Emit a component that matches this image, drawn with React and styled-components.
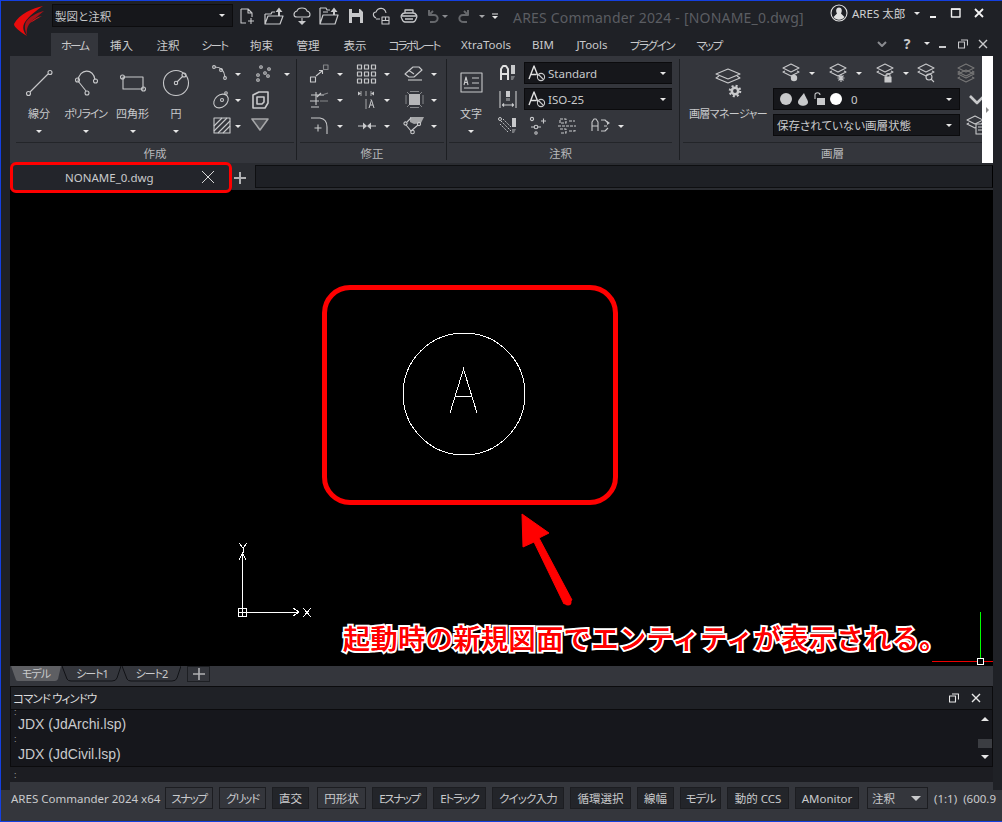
import React from "react";
import styled, { createGlobalStyle } from "styled-components";

const FONT = `"Noto Sans", "Noto Sans CJK JP", sans-serif`;

const Global = createGlobalStyle`
  html, body { margin: 0; padding: 0; background: #212329; }
  * { box-sizing: border-box; }
  body { font-family: ${FONT}; font-feature-settings: "palt"; }
`;

const Root = styled.div`
  width: 1002px; height: 822px; display: flex; flex-direction: column; overflow: hidden;
  background: #1f2126; color: #c9cacc; position: relative;
  border-top: 1px solid #1440e0; border-left: 1px solid #1440e0; border-bottom: 1px solid #1440e0;
`;

/* ---------- icons ---------- */
const Glyph = styled.svg`
  display: block; flex-shrink: 0; fill: none; stroke: ${p => p.$c || "#c8c9cb"};
  stroke-width: ${p => p.$sw || 1.1}; stroke-linejoin: round;
`;
const G = ({ w = 24, h = 20, c, sw, children }) => (
  <Glyph width={w} height={h} viewBox={`0 0 ${w} ${h}`} $c={c} $sw={sw}>{children}</Glyph>
);
const Dot = ({ x, y, r = 1.7 }) => <circle cx={x} cy={y} r={r} />;
const Solid = ({ d, c = "#c8c9cb" }) => <path d={d} fill={c} stroke="none" />;

const Caret = styled.span`
  display: block; flex-shrink: 0; width: 0; height: 0; margin-left: ${p => p.$ml || 0}px;
  border-left: 3px solid transparent; border-right: 3px solid transparent;
  border-top: 3px solid ${p => p.$c || "#e6e6e6"};
`;

/* ---------- title bar ---------- */
const TitleBar = styled.header`
  height: 32px; display: flex; align-items: flex-start; flex-shrink: 0; padding-top: 3px;
`;
const Logo = styled.div`width: 51px; height: 32px; padding-left: 12px; margin-top: 1px;`;
const Workspace = styled.div`
  width: 181px; height: 23px; display: flex; align-items: center; justify-content: space-between;
  background: #16171b; border: 1px solid #0c0c0e; padding: 0 7px 0 2px; font-size: 11.5px; color: #c6c7c9;
`;
const QuickBar = styled.div`display: flex; align-items: center; height: 24px;`;
const QuickBtn = styled.span`
  width: ${p => p.$w || 27}px; display: flex; justify-content: center; align-items: center;
`;
const WindowTitle = styled.div`
  font-size: 14px; letter-spacing: 0.2px; color: #5b5d62; margin-left: 8px; white-space: nowrap; width: 317px; line-height: 26px; padding-top: 1px;
`;
const UserBox = styled.div`
  display: flex; align-items: center; height: 20px; font-size: 11.5px; color: #d0d1d3; margin-top: -1px;
`;
const UserName = styled.span`margin: 0 9px 0 4px; white-space: nowrap;`;
const WinBtn = styled.span`
  display: flex; width: ${p => p.$w || 22}px; justify-content: center; align-items: center;
`;
const HelpMark = styled.span`font-weight: 700; font-size: 14px; color: #c9cacc;`;

/* ---------- ribbon tabs ---------- */
const TabsRow = styled.nav`height: 23px; display: flex; align-items: stretch; padding-left: 50px; flex-shrink: 0;`;
const RibbonTab = styled.div`
  width: ${p => p.$w}px; display: flex; align-items: center; justify-content: center;
  font-size: 11.5px; color: #c9cacc; white-space: nowrap; letter-spacing: ${p => p.$ls || 0}px;
  background: ${p => (p.$on ? "#34363c" : "transparent")};
`;
const TabTools = styled.div`display: flex; align-items: center; margin-left: 139px; margin-top: -2px;`;

/* ---------- ribbon ---------- */
const Ribbon = styled.section`
  height: 107px; display: flex; flex-shrink: 0; margin-left: 9px; margin-right: 9px; background: #34363c; overflow: hidden;
`;
const Panel = styled.div`
  width: ${p => p.$w}px; flex-shrink: 0; display: flex; flex-direction: column; position: relative;
  padding: 0 ${p => p.$pr ?? 3}px 0 ${p => p.$pl ?? 3}px;
  &::after { content: ""; position: absolute; right: 0; top: 3px; bottom: 3px; width: 1px; background: ${p => (p.$nosep ? "transparent" : "#1d1f23")}; }
`;
const PanelBody = styled.div`
  height: 87px; flex-shrink: 0; display: flex; overflow: hidden; padding-left: ${p => p.$pl || 0}px; border-bottom: 1px solid #232529;
`;
const PanelLabel = styled.div`
  font-size: 11.5px; color: #b8b9bb; text-align: center; line-height: 19px; padding-top: 1px;
`;
const BigBtn = styled.div`
  width: ${p => p.$w}px; flex-shrink: 0; display: flex; flex-direction: column; align-items: center; padding-top: 4px;
  margin-right: ${p => p.$mr || 0}px;
`;
const BigIcon = styled.div`height: 40px; width: 100%; display: flex; justify-content: center;`;
const BigLabel = styled.div`
  font-size: 11px; line-height: 16px; margin-top: 6px; color: #c9cacc; white-space: nowrap; height: 16px; letter-spacing: ${p => p.$ls || 0}px;
`;
const BigCaret = styled.div`margin-top: 8px;`;
const SmallGrid = styled.div`
  display: grid; grid-template-columns: ${p => p.$widths}; grid-auto-rows: 26px; padding-top: 5px; align-content: start;
`;
const Tool = styled.div`
  display: flex; align-items: center; gap: ${p => p.$gap ?? 5}px;
  ${p => (p.$w ? `width: ${p.$w}px; flex-shrink: 0;` : "")}
  padding-left: ${p => p.$pl || 0}px;
`;
const Stack = styled.div`display: flex; flex-direction: column; padding-top: 6px;`;
const StackRow = styled.div`
  display: flex; align-items: center; height: ${p => p.$h || 22}px; margin-bottom: ${p => p.$mb ?? 4}px;
`;
const Select = styled.div`
  width: ${p => p.$w}px; height: 22px; flex-shrink: 0; display: flex; align-items: center; gap: 2px;
  margin-left: ${p => p.$ml || 0}px;
  background: #16171b; border: 1px solid #0b0b0d; padding: 0 7px 0 3px;
  font-size: 11.5px; color: #c9cacc; white-space: nowrap;
`;
const Grow = styled.span`flex: 1;`;
const Cell = styled.div`
  width: ${p => p.$w}px; flex-shrink: 0; display: flex; justify-content: center; align-items: center; margin-left: ${p => p.$ml || 0}px;
`;
const LayerZero = styled.span`margin-left: 2px;`;

const WhiteStrip = styled.div`
  width: 11px; flex-shrink: 0; background: #fff; display: flex; align-items: center; justify-content: center; margin-left: auto;
`;
const StripArrow = styled.span`
  width: 0; height: 0; border-top: 3px solid transparent; border-bottom: 3px solid transparent; border-left: 3px solid #8a8a8a;
`;

/* ---------- document tabs ---------- */
const DocBar = styled.div`
  height: 27px; flex-shrink: 0; margin: 0 9px; display: flex; align-items: stretch; background: #2a2c31; padding-top: 2px;
  position: relative; z-index: 2;
`;
const DocTab = styled.div`
  width: 222px; display: flex; align-items: center; background: #23252b; font-size: 11.5px; color: #c9cacc; padding-left: 55px; position: relative;
`;
const DocClose = styled.span`position: absolute; left: 191px; top: 5px;`;
const DocAdd = styled.div`width: 23px; display: flex; align-items: center; justify-content: center; padding-right: 7px;`;
const DocRest = styled.div`flex: 1; background: #1e2025; border: 1px solid #0e0f11; border-right-color: #000; height: 23px;`;
const TabHighlight = styled.div`
  position: absolute; left: 0; top: -1px; width: 222px; height: 31px; border: 3px solid #f00; border-radius: 6px; pointer-events: none;
`;

/* ---------- canvas ---------- */
const Canvas = styled.main`
  height: 476px; flex-shrink: 0; margin: 0 9px; background: #000; position: relative; overflow: hidden;
`;
const Drawing = styled.svg`position: absolute; left: 0; top: 0; width: 983px; height: 476px; fill: none; stroke: #fff;`;
const Callout = styled.div`
  position: absolute; left: 312px; top: 95px; width: 296px; height: 220px; border: 5px solid #f00; border-radius: 28px;
`;
const Note = styled.div`
  position: absolute; left: 333px; top: 429px; white-space: nowrap; font-size: 27px; line-height: 40px; font-weight: 500; color: #f00;
  font-feature-settings: normal; letter-spacing: 0.6px; -webkit-text-stroke: 4px #fff; paint-order: stroke fill;
  text-shadow: 0 0 .6px #f00;
`;

/* ---------- sheet tabs ---------- */
const SheetBar = styled.div`
  height: 16px; flex-shrink: 0; margin: 0 9px; display: flex; background: #34363c;
`;
const Sheet = styled.div`
  width: ${p => p.$w}px; height: 16px; position: relative; font-size: 11px; line-height: 16px; text-align: center; color: #c9cacc; letter-spacing: -1px;
`;
const SheetShape = styled.svg`position: absolute; left: 0; top: 0; z-index: 0;`;
const SheetText = styled.span`position: relative; z-index: 1;`;
const SheetAdd = styled.div`
  width: 23px; height: 16px; margin-left: 6px; border: 1px solid #1d1f23; display: flex; align-items: center; justify-content: center;
`;

/* ---------- command window ---------- */
const Gap = styled.div`height: 4px; flex-shrink: 0; margin: 0 9px; background: #34363c;`;
const Command = styled.section`
  height: 81px; flex-shrink: 0; margin: 0 9px; background: #16171c; border: 1px solid #0b0b0d; display: flex; flex-direction: column;
`;
const CommandHead = styled.div`
  height: 23px; flex-shrink: 0; background: #1f2126; border-bottom: 1px solid #0b0b0d; display: flex; align-items: center;
  padding: 0 5px 0 2px; font-size: 11.5px; color: #dcdcdd;
`;
const CommandName = styled.span`letter-spacing: -0.9px;`;
const HeadBtn = styled.span`width: 22px; display: flex; justify-content: center;`;
const CommandBody = styled.div`flex: 1; display: flex; position: relative;`;
const Lines = styled.div`flex: 1; padding-left: 7px; font: 14px/20px "Liberation Sans", sans-serif; color: #c9cacc;`;
const Colon = styled.div`height: ${p => p.$h}px; line-height: ${p => p.$h}px; font-size: 9px; margin-left: -4px; color: #9a9b9d;`;
const Line = styled.div`height: 20px; line-height: 20px;`;
const ScrollBar = styled.div`width: 15px; display: flex; flex-direction: column; align-items: center; padding-top: 7px;`;
const ArrowUp = styled.span`width: 0; height: 0; border-left: 4px solid transparent; border-right: 4px solid transparent; border-bottom: 4px solid #e6e6e6;`;
const ArrowDown = styled(ArrowUp)`border-bottom: 0; border-top: 4px solid #e6e6e6; margin-top: 7px;`;
const Thumb = styled.span`width: 14px; height: 9px; background: #3b3d42; margin-top: 18px;`;
const CommandInput = styled.div`
  height: 15px; flex-shrink: 0; margin: 0 9px; background: #1c1d22; padding-left: 4px; color: #9a9b9d; font-size: 9px; line-height: 15px;
`;

/* ---------- status bar ---------- */
const StatusBar = styled.footer`
  flex: 1; display: flex; align-items: flex-start; padding-top: 5px; padding-left: 10px; font-size: 11.5px; color: #c9cacc; white-space: nowrap; overflow: hidden;
  background:
    linear-gradient(#34363c, #34363c) 9px 0 / calc(100% - 18px) 100% no-repeat,
    linear-gradient(#34363c, #34363c) 0 8px / 100% 100% no-repeat,
    #1f2126;
`;
const StatusTitle = styled.span`width: 154px; line-height: 23px; flex-shrink: 0;`;
const StatusBtn = styled.div`
  width: ${p => p.$w}px; height: 22px; margin-right: ${p => p.$mr ?? 6}px; flex-shrink: 0; background: ${p => (p.$on ? "#23252a" : "#34363c")};
  border: 1px solid #1c1d21; display: flex; align-items: center; justify-content: center; color: #c9cacc; letter-spacing: ${p => p.$ls || 0}px;
`;
const StatusSelect = styled(StatusBtn)`justify-content: space-between; padding: 0 6px 0 4px; margin-left: 2px;`;
const BigDown = styled.span`width: 0; height: 0; border-left: 5px solid transparent; border-right: 5px solid transparent; border-top: 5px solid #c9cacc;`;
const StatusInfo = styled.span`line-height: 23px; word-spacing: 3px;`;

/* ---------- data ---------- */
const ribbonTabs = [
  ["ホーム", 47, true, -2], ["挿入", 47], ["注釈", 46], ["シート", 47, false, -1.5], ["拘束", 47], ["管理", 46], ["表示", 48],
  ["コラボレート", 70, false, -1.9], ["XtraTools", 74], ["BIM", 40], ["JTools", 58], ["プラグイン", 62, false, -1.4], ["マップ", 52, false, -1.5],
];
const statusBtns = [
  ["スナップ", 48, false, 6, -1.4], ["グリッド", 47, false, 6, -1.4], ["直交", 37, true, 8, 0], ["円形状", 49, false, 6, 0], ["Eスナップ", 55, true, 6, -1.4], ["Eトラック", 53, true, 6, -1.2],
  ["クイック入力", 72, true, 6, -0.8], ["循環選択", 61, true, 6, 0], ["線幅", 37, true, 6, 0], ["モデル", 41, true, 6, -1], ["動的 CCS", 62, true, 6, 0], ["AMonitor", 64, true, 6, 0],
];

const LayerGlyph = ({ y = 0, c }) => (
  <g stroke={c}>
    <path d={`M4 ${y + 5} L12 ${y + 1} L20 ${y + 5} L12 ${y + 9} Z`} />
    <path d={`M6 ${y + 8} L4 ${y + 9} L12 ${y + 13} L20 ${y + 9} L18 ${y + 8}`} />
  </g>
);
const TextStyleIcon = () => (
  <G w={18} h={18}>
    <path d="M1 15 L6 2 L10 12 M2.8 10.5 H8.5" sw={1.4} strokeWidth={1.4} stroke="#e0e0e0" />
    <circle cx="13" cy="13" r="3.6" />
    <path d="M10.5 10.5 L15.5 15.5" />
  </G>
);

export default function App() {
  return (
    <Root>
      <Global />
      <TitleBar>
        <Logo>
          <svg width="32" height="32" viewBox="0 0 32 32">
            <path d="M30 1 C20 3 6 9 1 19 C1 22 6 26 14 31 C10 26 9 22 12 17 C16 11 24 5 30 1Z" fill="#e80c0c" />
            <path d="M31 6 C23 8 16 12 13 17 C11 21 12 26 14 30 C13 24 15 19 20 15 C24 12 27 9 31 6Z" fill="#a81218" />
            <path d="M29 11 C24 12 19 15 16 19 C18 17 24 14 29 11Z" fill="#d81616" />
          </svg>
        </Logo>
        <Workspace>製図と注釈<Caret /></Workspace>
        <QuickBar>
          <QuickBtn $w={27}><G w={18} h={18}><path d="M3 2 H10 L14 6 V10 M3 2 V16 H8 M10 2 V6 H14" /><path d="M13 11 V17 M10 14 H16" /></G></QuickBtn>
          <QuickBtn $w={28}><G w={22} h={20} sw={1.2}><path d="M2 8 H8 L9 6 H12 M2 8 V18 H17 L20 10 H5 L2 18" /><Solid d="M15 10 V6 H12.5 L16 1.5 L19.5 6 H17 V10Z" /></G></QuickBtn>
          <QuickBtn $w={27}><G w={20} h={20}><path d="M5 11 C1 11 1 6 5 5 C6 1 14 1 15 5 C19 6 19 11 15 11 Z" /><path d="M10 12 V15" /><Solid d="M6 15 H14 L10 19Z" /></G></QuickBtn>
          <QuickBtn $w={27}><G w={22} h={20} sw={1.2}><path d="M2 2 H8 L9 4 H12 M2 2 V18 H17 L20 9 H5 L2 18 M5 6 H10" /><Solid d="M15 9 V6 H12.5 L16 1.5 L19.5 6 H17 V9Z" /></G></QuickBtn>
          <QuickBtn $w={27}><G w={16} h={16} sw={0}><Solid d="M1 1 H12 L15 4 V15 H1Z" /><Solid d="M4 1 H11 V5 H4Z M4 9 H12 V15 H4Z" c="#1f2126" /></G></QuickBtn>
          <QuickBtn $w={26}><G w={20} h={20}><path d="M4 12 C0 10 1 6 4 6 C6 1 13 1 14 7 M8 13 H4" /><rect x="10" y="11" width="7" height="7" /><path d="M10 14.5 H17 M13.5 11 V14.5" /></G></QuickBtn>
          <QuickBtn $w={28}><G w={18} h={16} sw={1.3}><path d="M5 5 V2 H13 V5 M2 11 C0 8 2 5 5 5 H13 C16 5 18 8 16 11 C15 14 13 14 13 14 H5 C5 14 3 14 2 11Z M2 8 H16 M5 11 H13" /></G></QuickBtn>
          <QuickBtn $w={19}><G w={16} h={16} c="#66686c" sw={2}><path d="M4 2 V7 H9 C14 7 14 14 8 14 H5 M4 7 L8 3" /></G></QuickBtn>
          <Caret $c="#8a8c90" />
          <QuickBtn $w={31}><G w={16} h={16} c="#66686c" sw={2}><path d="M12 2 V7 H7 C2 7 2 14 8 14 H11 M12 7 L8 3" /></G></QuickBtn>
          <Caret $c="#a5a6a8" />
          <QuickBtn $w={20}><G w={8} h={10} c="#e6e6e6" sw={1}><path d="M1 3 H7" /><Solid d="M1 5 H7 L4 8Z" c="#e6e6e6" /></G></QuickBtn>
        </QuickBar>
        <WindowTitle>ARES Commander 2024 - [NONAME_0.dwg]</WindowTitle>
        <UserBox>
          <G w={18} h={18} c="#e0e0e0"><circle cx="9" cy="9" r="8" /><Solid d="M9 3.5 C12 3.5 12.5 7 11 9.5 L14.5 13 C12 16.5 6 16.5 3.5 13 L7 9.5 C5.5 7 6 3.5 9 3.5Z" c="#e0e0e0" /></G>
          <UserName>ARES 太郎</UserName>
          <Caret />
          <WinBtn $w={28}><G w={10} h={10} c="#f0f0f0" sw={2}><path d="M1 9 H7" /></G></WinBtn>
          <WinBtn $w={16}><G w={12} h={12} c="#f0f0f0" sw={1.4}><path d="M1.5 2 H10 V10 H1.5Z" /><path d="M1 2.2 H10.5" /></G></WinBtn>
          <WinBtn $w={30}><G w={12} h={12} c="#f4f4f4" sw={1.8}><path d="M2 2 L10 10 M10 2 L2 10" /></G></WinBtn>
        </UserBox>
      </TitleBar>

      <TabsRow>
        {ribbonTabs.map(([t, w, on, ls]) => <RibbonTab key={t} $w={w} $on={on} $ls={ls}>{t}</RibbonTab>)}
        <TabTools>
          <WinBtn $w={16}><G w={10} h={8} c="#8a8c90" sw={2}><path d="M1 2 L5 6 L9 2" /></G></WinBtn>
          <WinBtn $w={34}><HelpMark>?</HelpMark></WinBtn>
          <Caret />
          <WinBtn $w={26}><G w={10} h={10} c="#c9cacc" sw={2}><path d="M1 8 H8" /></G></WinBtn>
          <WinBtn $w={14}><G w={10} h={10} c="#c9cacc"><rect x="0.5" y="3" width="6" height="6" /><path d="M3 1 H9.5 V6.5" /></G></WinBtn>
          <WinBtn $w={26}><G w={10} h={10} c="#c9cacc" sw={1.4}><path d="M1 1 L9 9 M9 1 L1 9" /></G></WinBtn>
        </TabTools>
      </TabsRow>

      <Ribbon>
        <Panel $w={287} $pl={6}>
          <PanelBody>
            <BigBtn $w={46}><BigIcon><G w={40} h={40}><path d="M11 32 L29 14" /><Dot x={9.5} y={33.5} r={2} /><Dot x={31} y={12.5} r={2} /></G></BigIcon><BigLabel>線分</BigLabel><BigCaret><Caret /></BigCaret></BigBtn>
            <BigBtn $w={47}><BigIcon><G w={40} h={40}><path d="M20 31 L12 21 C13 8 28 8 29 20" /><Dot x={21} y={33} r={2} /><Dot x={11.5} y={20} r={2} /><Dot x={29.5} y={21} r={2} /></G></BigIcon><BigLabel $ls={-1.2}>ポリライン</BigLabel><BigCaret><Caret /></BigCaret></BigBtn>
            <BigBtn $w={47}><BigIcon><G w={40} h={40}><path d="M10 17 V29 H30 V17 Z" /><Dot x={9.5} y={17} r={2} /><Dot x={30.5} y={29} r={2} /></G></BigIcon><BigLabel>四角形</BigLabel><BigCaret><Caret /></BigCaret></BigBtn>
            <BigBtn $w={40} $mr={14}><BigIcon><G w={40} h={40}><circle cx="20" cy="23" r="12.5" /><Dot x={20} y={23} r={1.7} /><path d="M21 22 L27 16" /><Dot x={28} y={15} r={2} /></G></BigIcon><BigLabel>円</BigLabel><BigCaret><Caret /></BigCaret></BigBtn>
            <SmallGrid $widths="40px 42px">
              <Tool $gap={1}><G><path d="M5 3 C10 3 14 5 15 13" /><Dot x={4} y={3} r={1.4} /><Dot x={11} y={6} r={1.4} /><Dot x={15} y={14} r={1.4} /></G><Caret /></Tool>
              <Tool $gap={10}><G><Dot x={11} y={3} r={1.3} /><Dot x={19} y={5} r={1.3} /><Dot x={15} y={9} r={1.3} /><Dot x={8} y={11} r={1.3} /><Dot x={18} y={12} r={1.3} /><Dot x={8} y={16} r={1.3} /></G><Caret /></Tool>
              <Tool $gap={1}><G><ellipse cx="11" cy="11" rx="8" ry="6" transform="rotate(-40 11 11)" /><Dot x={12} y={10} r={1.5} /><Dot x={16} y={3} r={1.3} /></G><Caret /></Tool>
              <Tool $gap={10}><G sw={1.6} c="#c8c9cb"><path d="M3 5 L9 2 H18 V13 L15 18 H3 Z" /><path d="M7 7 H14 V12 L12 14 H7 Z" /></G></Tool>
              <Tool $gap={1}><G><rect x="4" y="2" width="16" height="15" /><path d="M4 10 L12 2 M4 15 L17 2 M8 17 L20 5 M13 17 L20 10" /></G><Caret /></Tool>
              <Tool $gap={10}><G sw={1.6} c="#a5a6a8"><path d="M2 3 H18 L10 14 Z" fill="#4d4f54" /></G></Tool>
            </SmallGrid>
          </PanelBody>
          <PanelLabel>作成</PanelLabel>
        </Panel>

        <Panel $w={150}>
          <PanelBody $pl={8}>
            <SmallGrid $widths="47px 47px 47px">
              <Tool><G><rect x="2.5" y="13" width="5" height="5" /><rect x="15.5" y="1" width="4.5" height="4.5" stroke="#85878a" /><path d="M8 12 L14 7 M11 6.5 H14.5 V10" /></G><Caret /></Tool>
              <Tool><G sw={1.2}><rect x="2.5" y="1" width="4" height="4" /><rect x="9.5" y="1" width="4" height="4" /><rect x="16.5" y="1" width="4" height="4" /><rect x="2.5" y="8" width="4" height="4" /><rect x="9.5" y="8" width="4" height="4" /><rect x="16.5" y="8" width="4" height="4" /><rect x="2.5" y="15" width="4" height="4" /><rect x="9.5" y="15" width="4" height="4" /><rect x="16.5" y="15" width="4" height="4" /></G><Caret /></Tool>
              <Tool><G><path d="M3 10 L11 3 H17 L20 6 L12 13 H7 Z M7 6.5 L12 10" /><path d="M6 16 H20" stroke="#85878a" strokeWidth={2} /></G><Caret /></Tool>
              <Tool><G><path d="M3 5 H16 M2 11 H11 M3 17 H11 M8 2 V15 M13 3 L9 7" /><path d="M12 11 H20 M14 5 L20 3" stroke="#85878a" /></G><Caret /></Tool>
              <Tool><G sw={1}><path d="M6 1 V6 M11 1 V6 M16 1 V6 M11 9 V19 M16 9 V10" stroke="#a5a6a8" /><Solid d="M3 1.5 L6 3.5 L3 5.5Z M19 1.5 L16 3.5 L19 5.5Z" /><path d="M14 18 L16.5 10 L19 18 M15 15 H18" /></G><Caret /></Tool>
              <Tool><G sw={1}><Solid d="M7 4 H18 V15 H7Z" c="#b5b6b8" /><path d="M8 1.5 H17 M8 17.5 H17 M4 5 V14 M21 5 V14 M5 2 L7 4 M20 2 L18 4 M5 17 L7 15 M20 17 L18 15" stroke="#85878a" /></G><Caret /></Tool>
              <Tool><G><path d="M3 2 H12 Q19 3 19 11 V18" /><path d="M10 8.5 V15.5 M6.5 12 H13.5" /></G><Caret /></Tool>
              <Tool><G sw={1} c="#c8c9cb"><path d="M3 10 H9 M21 10 H15" /><Solid d="M8 6.5 L12 10 L8 13.5Z M16 6.5 L12 10 L16 13.5Z" /></G><Caret /></Tool>
              <Tool><G><Solid d="M8 1 H22 L19 7 L12 8 L8 6Z" c="#a5a6a8" /><path d="M5 6 L9 2 M4 9 L9 15 L16 9" /><Dot x={3.5} y={7.5} r={1.6} /><Dot x={10.5} y={16} r={1.8} /><Dot x={17} y={8} r={1.6} /></G><Caret /></Tool>
            </SmallGrid>
          </PanelBody>
          <PanelLabel>修正</PanelLabel>
        </Panel>

        <Panel $w={233} $pl={2} $pr={8}>
          <PanelBody $pl={5}>
            <BigBtn $w={34} $mr={8}>
              <BigIcon><G w={30} h={40}><rect x="5" y="13" width="21" height="19" /><path d="M16 18 H23 M16 23 H23 M8 28 H23 M8 25 L10 17 L12 25 M9 22.5 H11" /></G></BigIcon>
              <BigLabel>文字</BigLabel><BigCaret><Caret /></BigCaret>
            </BigBtn>
            <Stack>
              <StackRow>
                <Cell $w={24}><G><path d="M5 17 V6 L7 3 H10 L12 6 V17 M5 11 H12" stroke="#e0e0e0" strokeWidth={2} /><Solid d="M15 2 H19 V11 H15Z" c="#c8c9cb" /><Solid d="M15 13 H19 L17 17 H15Z" c="#77797d" /></G></Cell>
                <Select $w={150} $ml={4}><TextStyleIcon />Standard<Grow /><Caret /></Select>
              </StackRow>
              <StackRow $mb={5}>
                <Cell $w={24}><G><path d="M4 2 V19 M20 2 V19 M7 16 H17 M8 14.5 L6.5 16 L8 17.5 M16 14.5 L17.5 16 L16 17.5" /><Solid d="M10 2 H14 V8 H10Z" c="#c8c9cb" /><Solid d="M10 9 H14 V12 H10Z" c="#77797d" /></G></Cell>
                <Select $w={150} $ml={4}><TextStyleIcon />ISO-25<Grow /><Caret /></Select>
              </StackRow>
              <StackRow>
                <Cell $w={24}><G sw={1}><Dot x={4} y={3} r={1.5} /><path d="M5 5 L15 15 M7 3 L15 11 M4 8 L12 16" strokeDasharray="1.5 1" /><Solid d="M16 2 H20 V11 H16Z" /><Solid d="M16 13 H20 L18 17 H16Z" c="#77797d" /></G></Cell>
                <Cell $w={32}><G><Dot x={8} y={3} r={1.6} /><Dot x={12} y={11} r={1.8} /><Dot x={12} y={17} r={1.2} /><path d="M7 11 H10 M14 11 H17 M17 5 H22 M19.5 2.5 V7.5" /></G></Cell>
                <Cell $w={30}><G><path d="M5 3 H11 V7 H5 Z M5 13 H11 V17 H5 M14 5 H20 M14 15 H20 V13 M3 10 H21" strokeDasharray="3 1" /></G></Cell>
                <Cell $w={36}><G><path d="M4 15 V6 L6 3 H8 L10 6 V15 M4 10 H10" /><path d="M13 4 H17 L20 7 M13 15 H17 L20 12 M16 10 H19" /><Solid d="M19 5 L22 7 L19 9Z" /></G></Cell>
                <Caret />
              </StackRow>
            </Stack>
          </PanelBody>
          <PanelLabel>注釈</PanelLabel>
        </Panel>

        <Panel $w={302} $nosep $pl={3} $pr={0}>
          <PanelBody>
            <BigBtn $w={90}>
              <BigIcon>
                <G w={40} h={40}>
                  <path d="M8 14 L20 9 L32 14 L20 19 Z" />
                  <path d="M11 16 L8 18 L20 23 L32 18 L29 16" />
                  <circle cx="27" cy="31" r="3.2" stroke="#c8c9cb" strokeWidth={2.6} />
                  <circle cx="27" cy="31" r="5.2" stroke="#c8c9cb" strokeWidth={2.2} strokeDasharray="2 2.08" />
                </G>
              </BigIcon>
              <BigLabel $ls={-0.6}>画層マネージャー</BigLabel>
            </BigBtn>
            <Stack>
              <StackRow>
                <Tool $gap={6} $w={47} $pl={6}><G><LayerGlyph /><circle cx="15" cy="15" r="3.2" fill="#c8c9cb" stroke="none" /></G><Caret /></Tool>
                <Tool $gap={6} $w={47} $pl={6}><G><LayerGlyph /><path d="M15 11 V19 M11.5 15 H18.5 M12.5 12.5 L17.5 17.5 M17.5 12.5 L12.5 17.5" /></G><Caret /></Tool>
                <Tool $gap={6} $w={47} $pl={6}><G><LayerGlyph /><rect x="12" y="14" width="6" height="5" fill="#c8c9cb" /><path d="M13 14 V12 C13 10 17 10 17 12 V14" /></G><Caret /></Tool>
                <Tool $w={40}><G><LayerGlyph /><circle cx="15" cy="14" r="3" /><path d="M17 16 L20 19" /></G></Tool>
                <Tool $gap={5} $w={40}><G c="#777"><LayerGlyph /><LayerGlyph y={6} /></G><Caret /></Tool>
              </StackRow>
              <StackRow>
                <Select $w={187}>
                  <Glyph width="70" height="16" viewBox="0 0 70 16"><circle cx="9" cy="8" r="6" fill="#c8c9cb" stroke="none" /><path d="M27 2 C23 7 21 9 21 11 C21 16 31 16 31 11 C31 9 29 7 27 2Z" fill="#c8c9cb" stroke="none" /><path d="M38 8 V4 C38 1 43 1 43 4" /><rect x="40" y="7" width="8" height="7" fill="#c8c9cb" stroke="none" /><circle cx="59" cy="8" r="6" fill="#fff" stroke="none" /></Glyph>
                  <LayerZero>0</LayerZero><Grow /><Caret />
                </Select>
                <Cell $w={22} $ml={6}><G w={18} h={12} c="#c8c9cb" sw={2.6}><path d="M2 3 L9 10 L16 3" /></G></Cell>
              </StackRow>
              <StackRow $mb={0}>
                <Select $w={187}>保存されていない画層状態<Grow /><Caret /></Select>
                <Cell $w={22} $ml={4}><G><LayerGlyph /><rect x="13" y="9" width="8" height="10" fill="#34363c" /><path d="M15 12 H19 M15 15 H19" /></G></Cell>
              </StackRow>
            </Stack>
          </PanelBody>
          <PanelLabel>画層</PanelLabel>
        </Panel>
        <WhiteStrip><StripArrow /></WhiteStrip>
      </Ribbon>

      <DocBar>
        <DocTab>NONAME_0.dwg<DocClose><G w={14} h={14} c="#d8d8d8" sw={1}><path d="M1 1 L13 13 M13 1 L1 13" /></G></DocClose></DocTab>
        <DocAdd><G w={12} h={12} c="#b0b1b3" sw={2}><path d="M6 0 V12 M0 6 H12" /></G></DocAdd>
        <DocRest />
        <TabHighlight />
      </DocBar>

      <Canvas>
        <Drawing viewBox="0 0 983 476">
          <g shapeRendering="crispEdges">
            <circle cx="454" cy="204" r="61" />
            <path d="M440 223 L453.5 179 L467 223 M445 206.5 H462" />
            <path d="M232.5 422 V363 M232.5 422 H289 M229 370 L232.5 363 L236 370 M283 418 L289 422 L283 426" />
            <rect x="228.5" y="418" width="8" height="8" />
            <path d="M232.5 422 H228.5 M232.5 418 V426" />
            <path d="M229 353 L233 358 L237 353 M233 358 V363 M293 418 L301 427 M301 418 L293 427" />
            <path d="M970.5 422 V471" stroke="#0f0" />
            <path d="M922 471.5 H983" stroke="#e00" />
            <rect x="967.5" y="468.5" width="6" height="6" stroke="#fff" fill="#000" />
          </g>
          <path d="M512 324 L539 343 L529 348 L562 410 L554 414 L524 352 L513 357 Z" fill="#f00" stroke="#f00" strokeLinejoin="round" />
          <circle cx="558" cy="412" r="3.5" fill="#f00" stroke="none" />
        </Drawing>
        <Callout />
        <Note>起動時の新規図面でエンティティが表示される。</Note>
      </Canvas>

      <SheetBar>
        <Sheet $w={52}>
          <SheetShape width="52" height="16" viewBox="0 0 52 16"><path d="M1 0 L6 14 Q6.5 15 8 15 H45 Q47 15 48 13 L51 0 Z" fill="#5e5f63" /></SheetShape>
          <SheetText>モデル</SheetText>
        </Sheet>
        <Sheet $w={60}>
          <SheetShape width="60" height="16" viewBox="0 0 60 16"><path d="M0 0 L5 13 Q6 15 9 15 H50 Q54 15 55 12 L59 0" fill="none" stroke="#111216" /></SheetShape>
          <SheetText>シート1</SheetText>
        </Sheet>
        <Sheet $w={59}>
          <SheetShape width="59" height="16" viewBox="0 0 59 16"><path d="M0 0 L5 13 Q6 15 9 15 H50 Q54 15 55 12 L59 0" fill="none" stroke="#111216" /></SheetShape>
          <SheetText>シート2</SheetText>
        </Sheet>
        <SheetAdd><G w={12} h={12} c="#b0b1b3" sw={1.6}><path d="M6 0 V12 M0 6 H12" /></G></SheetAdd>
      </SheetBar>
      <Gap />

      <Command>
        <CommandHead>
          <CommandName>コマンド ウィンドウ</CommandName><Grow />
          <HeadBtn><G w={10} h={10} c="#e8e8e8"><rect x="0.5" y="3" width="6" height="6" /><path d="M3 1 H9.5 V6.5" /></G></HeadBtn>
          <HeadBtn><G w={10} h={10} c="#e8e8e8" sw={1.4}><path d="M1 1 L9 9 M9 1 L1 9" /></G></HeadBtn>
        </CommandHead>
        <CommandBody>
          <Lines>
            <Colon $h={4}>:</Colon>
            <Line>JDX (JdArchi.lsp)</Line>
            <Colon $h={10}>:</Colon>
            <Line>JDX (JdCivil.lsp)</Line>
          </Lines>
          <ScrollBar><ArrowUp /><Thumb /><ArrowDown /></ScrollBar>
        </CommandBody>
      </Command>
      <CommandInput>:</CommandInput>

      <StatusBar>
        <StatusTitle>ARES Commander 2024 x64</StatusTitle>
        {statusBtns.map(([t, w, on, mr, ls]) => <StatusBtn key={t} $w={w} $on={on} $mr={mr} $ls={ls}>{t}</StatusBtn>)}
        <StatusSelect $w={61}>注釈<BigDown /></StatusSelect>
        <StatusInfo>(1:1) (600.9</StatusInfo>
      </StatusBar>
    </Root>
  );
}
